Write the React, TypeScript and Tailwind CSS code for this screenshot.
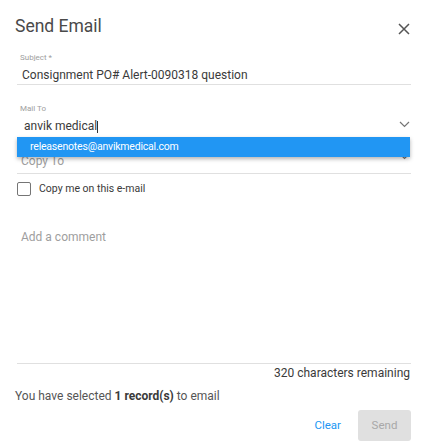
import React from "react";

const Chevron = () => (
  <svg width="11" height="7" viewBox="0 0 11 7" fill="none">
    <path d="M1 1l4.5 4.5L10 1" stroke="#757575" strokeWidth="1.2" />
  </svg>
);

const App = () => {
  return (
    <div
      className="w-[428px] h-[443px] bg-white overflow-hidden relative"
      style={{ fontFamily: "Roboto, 'Liberation Sans', sans-serif" }}
    >
      <div className="flex justify-between items-start pl-[15px] pr-[18px] pt-[15px] h-[48px]">
        <h1 className="text-[17.5px] leading-[22px] text-[#4a4a4a]">Send Email</h1>
        <button className="mt-[8px] text-[#555]">
          <svg width="12" height="12" viewBox="0 0 12 12">
            <path d="M1 1l10 10M11 1L1 11" stroke="#555" strokeWidth="1.5" />
          </svg>
        </button>
      </div>

      <div className="mx-[17px]">
        <div className="h-[37px] border-b border-[#e0e0e0] flex flex-col">
          <span className="pl-[3px] text-[8px] leading-[10px] text-[#9e9e9e] mt-[5px]">Subject *</span>
          <span className="pl-[5px] text-[12px] leading-[14px] text-[#3a3a3a] mt-[5px]">
            Consignment PO# Alert-0090318 question
          </span>
        </div>

        <div className="relative h-[53px] flex flex-col">
          <span className="pl-[3px] text-[8px] leading-[10px] text-[#9e9e9e] mt-[19px]">Mail To</span>
          <div className="flex items-center justify-between mt-[5px] pr-[1px]">
            <span className="pl-[7px] text-[12px] leading-[14px] text-[#3a3a3a]">
              anvik medical<span className="inline-block w-[1px] h-[12px] bg-[#333] align-middle" />
            </span>
            <span className="-mt-[4px]">
              <Chevron />
            </span>
          </div>
        </div>

        <div className="h-[36px] border-b border-[#e0e0e0] flex items-end justify-between pr-[1px] pb-[5px]">
          <span className="pl-[4px] text-[12px] leading-[14px] text-[#9e9e9e]">Copy To</span>
          <span className="mb-[8px]">
            <Chevron />
          </span>
        </div>

        <div className="absolute left-[17px] right-[18px] top-[137px] h-[20px] bg-[#2196f3] shadow-[0_2px_4px_rgba(0,0,0,0.3)] flex items-center pl-[13px]">
          <span className="text-[10.5px] text-white tracking-[-0.2px]">
            releasenotes@anvikmedical.com
          </span>
        </div>

        <label className="flex items-center gap-[8px] mt-[8px] h-[14px]">
          <span className="w-[14px] h-[14px] border border-[#757575] rounded-[2px]" />
          <span className="text-[10.5px] text-[#3a3a3a]">Copy me on this e-mail</span>
        </label>

        <div className="h-[168px] border-b border-[#e0e0e0] pt-[28px] pl-[4px]">
          <span className="text-[12px] leading-[14px] text-[#9e9e9e]">Add a comment</span>
        </div>

        <div className="text-right text-[12px] leading-[14px] text-[#3a3a3a] mt-[2px] pr-[1px]">
          320 characters remaining
        </div>
      </div>

      <div className="pl-[15px] mt-[9px] text-[12px] leading-[14px] text-[#555]">
        You have selected <span className="font-bold text-[#3a3a3a]">1 record(s)</span> to email
      </div>

      <div className="flex justify-end items-center gap-[17px] pr-[17px] mt-[7px]">
        <button className="text-[11.5px] text-[#2196f3]">Clear</button>
        <button className="w-[53px] h-[31px] rounded-[3px] bg-[#e0e0e0] text-[11.5px] text-[#a8a8a8]">
          Send
        </button>
      </div>
    </div>
  );
};

export default App;
